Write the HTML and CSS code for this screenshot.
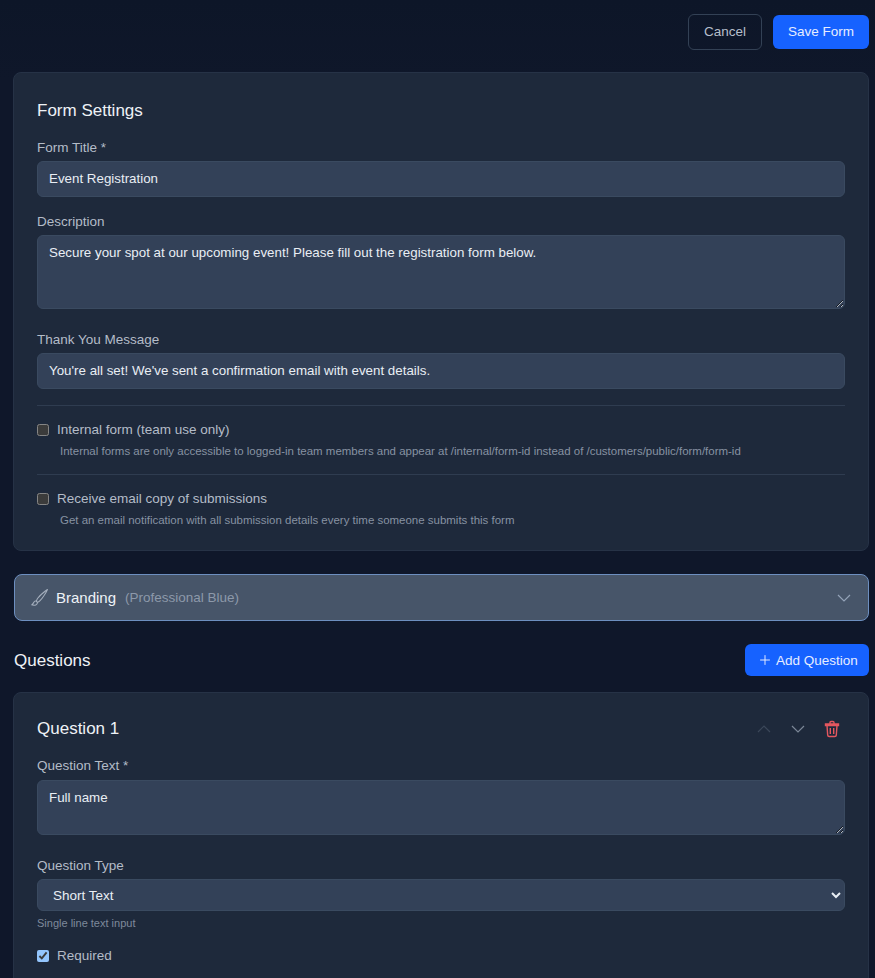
FILE: index.html

```html
<!DOCTYPE html>
<html>
<head>
    <title>Form Builder</title>
    <link rel="stylesheet" href="styles.css">
</head>
<body>
    <div class="top-actions">
        <button class="btn btn-outline">Cancel</button>
        <button class="btn btn-primary">Save Form</button>
    </div>

    <section class="card settings-card">
        <h2>Form Settings</h2>
        <div class="field">
            <label>Form Title *</label>
            <input type="text" value="Event Registration">
        </div>
        <div class="field field-tall">
            <label>Description</label>
            <textarea class="desc-area">Secure your spot at our upcoming event! Please fill out the registration form below.</textarea>
        </div>
        <div class="field">
            <label>Thank You Message</label>
            <input type="text" value="You're all set! We've sent a confirmation email with event details.">
        </div>
        <div class="option">
            <label class="check"><input type="checkbox"> Internal form (team use only)</label>
            <p class="option-help">Internal forms are only accessible to logged-in team members and appear at /internal/form-id instead of /customers/public/form/form-id</p>
        </div>
        <div class="option">
            <label class="check"><input type="checkbox"> Receive email copy of submissions</label>
            <p class="option-help">Get an email notification with all submission details every time someone submits this form</p>
        </div>
    </section>

    <div class="branding">
        <svg class="brush-icon" viewBox="0 0 16 16" fill="currentColor">
            <path d="M15.825.12a.5.5 0 0 1 .132.584c-1.53 3.43-4.743 8.17-7.095 10.64a6.1 6.1 0 0 1-2.373 1.534c-.018.227-.06.538-.16.868-.201.659-.667 1.479-1.708 1.74a8.1 8.1 0 0 1-3.078.132 4 4 0 0 1-.562-.135 1.4 1.4 0 0 1-.466-.247.7.7 0 0 1-.204-.288.62.62 0 0 1 .004-.443c.095-.245.316-.38.461-.452.394-.197.625-.453.867-.826.095-.144.184-.297.287-.472l.117-.198c.151-.255.326-.54.546-.848.528-.739 1.201-.925 1.746-.896q.19.012.348.048c.062-.172.142-.38.238-.608.261-.619.658-1.419 1.187-2.069 2.176-2.67 6.18-6.206 9.117-8.104a.5.5 0 0 1 .596.04M4.705 11.912a1.2 1.2 0 0 0-.419-.1c-.246-.013-.573.05-.879.479-.197.275-.355.532-.5.777l-.105.177c-.106.181-.213.362-.32.528a3.4 3.4 0 0 1-.76.861c.69.112 1.736.111 2.657-.12.559-.139.843-.569.993-1.06a3 3 0 0 0 .126-.75zm1.44.026c.12-.04.277-.1.458-.183a5.1 5.1 0 0 0 1.535-1.1c1.9-1.996 4.412-5.57 6.052-8.631-2.59 1.927-5.566 4.66-7.302 6.792-.442.543-.795 1.243-1.042 1.826-.121.288-.214.54-.275.72v.001l.575.575zm-4.973 3.04.007-.005zm3.582-3.043.002.001h-.002z"/>
        </svg>
        <span class="branding-title">Branding</span>
        <span class="branding-sub">(Professional Blue)</span>
        <svg class="chevron branding-chevron" viewBox="0 0 16 16"><path d="M2 5l6 6 6-6"/></svg>
    </div>

    <div class="questions-head">
        <h2>Questions</h2>
        <button class="btn btn-primary btn-add">
            <svg class="plus-icon" viewBox="0 0 16 16"><path d="M8 1.5v13M1.5 8h13"/></svg>
            Add Question
        </button>
    </div>

    <section class="card question-card">
        <div class="question-head">
            <h2>Question 1</h2>
            <div class="question-tools">
                <svg class="chevron chevron-off" viewBox="0 0 16 16"><path d="M2 11l6-6 6 6"/></svg>
                <svg class="chevron chevron-on" viewBox="0 0 16 16"><path d="M2 5l6 6 6-6"/></svg>
                <svg class="trash-icon" viewBox="0 0 16 17">
                    <path d="M1.5 3.5h13v1.5h-13zM6 3.5V2a1 1 0 0 1 1-1h2a1 1 0 0 1 1 1v1.5M3 5l.7 9.6a1.5 1.5 0 0 0 1.5 1.4h5.6a1.5 1.5 0 0 0 1.5-1.4L13 5M6.3 7.5v6M9.7 7.5v6"/>
                </svg>
            </div>
        </div>
        <div class="field field-tall">
            <label>Question Text *</label>
            <textarea class="question-area">Full name</textarea>
        </div>
        <div class="field field-type">
            <label>Question Type</label>
            <select>
                <option>Short Text</option>
                <option>Long Text</option>
                <option>Email</option>
            </select>
            <p class="type-help">Single line text input</p>
        </div>
        <label class="check"><input type="checkbox" checked> Required</label>
    </section>
</body>
</html>
```

FILE: styles.css

```css
* { box-sizing: border-box; }
html, body { height: 978px; overflow: hidden; }
body {
    margin: 0;
    padding: 14px 6px 0 14px;
    background: linear-gradient(#0d1628, #0f172a 80px);
    color: #e2e8f0;
    font-family: "Liberation Sans", Arial, sans-serif;
    font-size: 14px;
}
h2 { margin: 0; font-weight: 400; font-size: 17px; color: #eef2f6; }

.top-actions { display: flex; justify-content: flex-end; gap: 11px; margin-bottom: 22px; }
.btn {
    height: 36px;
    padding: 0 0 2px;
    border-radius: 6px;
    font-family: inherit;
    font-size: 13.5px;
    white-space: nowrap;
}
.btn-outline { width: 74px; background: transparent; border: 1px solid #334155; color: #b6bfcb; }
.btn-primary { width: 96px; height: 34px; margin-top: 1px; background: #1662ff; border: none; color: #e6edff; }

.card {
    background: #1e293b;
    border: 1px solid #263246;
    border-radius: 8px;
    padding: 0 23px;
}
.settings-card { height: 479px; padding-top: 27px; margin-left: -1px; }
.settings-card h2 { line-height: 21px; margin-bottom: 18px; }
.field { margin-bottom: 16px; }
.field-tall { margin-bottom: 22px; }
.field label { display: block; margin-bottom: 5px; font-size: 13.5px; line-height: 17px; color: #b4bcc8; }
.field input, .field textarea, .field select {
    display: block;
    width: 100%;
    background: #334158;
    border: 1px solid #3a4a60;
    border-radius: 6px;
    color: #e9eef4;
    font-family: inherit;
    font-size: 13.35px;
    padding: 9px 11px;
    outline: none;
}
.field input { height: 36px; padding: 8px 11px 10px; }
.desc-area { height: 74px; }
.field .question-area { height: 55px; margin-top: 6px; }

.option { border-top: 1px solid #2f3c50; padding-top: 15px; height: 69px; }
.check { display: flex; align-items: center; gap: 8px; font-size: 13.5px; line-height: 17px; color: #b4bcc8; }
.check input { width: 12px; height: 12px; margin: 0; color-scheme: dark; accent-color: #93c5fd; }
.option-help { margin: 5px 0 0 23px; font-size: 11.47px; line-height: 16px; color: #8792a2; }

.branding {
    display: flex;
    align-items: center;
    height: 47px;
    margin: 23px 0 23px;
    padding: 0 16px;
    background: #475569;
    border: 1px solid #6d8fc0;
    border-radius: 8px;
}
.brush-icon { width: 17px; height: 17px; margin-right: 8px; color: #a5afbd; }
.branding-title { font-size: 15px; color: #eef2f7; }
.branding-sub { margin-left: 9px; font-size: 13.5px; color: #8d99aa; }
.chevron { width: 16px; height: 16px; fill: none; stroke: currentColor; stroke-width: 1.2; }
.branding-chevron { margin-left: auto; color: #94a3b8; }

.questions-head { display: flex; justify-content: space-between; align-items: center; margin-bottom: 16px; }
.questions-head h2 { padding-top: 2px; }
.btn-add {
    display: flex;
    align-items: center;
    gap: 5px;
    width: 124px;
    height: 32px;
    margin: 0;
    padding: 0 12px 0 14px;
}
.plus-icon { width: 12px; height: 12px; flex: none; fill: none; stroke: currentColor; stroke-width: 1.3; }

.question-card { height: 300px; margin-left: -1px; padding-top: 25px; }
.question-head { display: flex; justify-content: space-between; align-items: center; margin-bottom: 18px; height: 21px; }
.question-tools { display: flex; align-items: center; gap: 18px; padding-right: 5px; }
.chevron-off { color: #3b4759; }
.chevron-on { color: #7b8797; }
.trash-icon { width: 16px; height: 18px; fill: none; stroke: #e5575f; stroke-width: 1.4; }
.field-type { margin-bottom: 17px; }
.field select { height: 32px; padding: 0 11px; font-size: 13.5px; }
.type-help { margin: 5px 0 0; font-size: 11px; line-height: 14px; color: #7e8a9b; }
```
